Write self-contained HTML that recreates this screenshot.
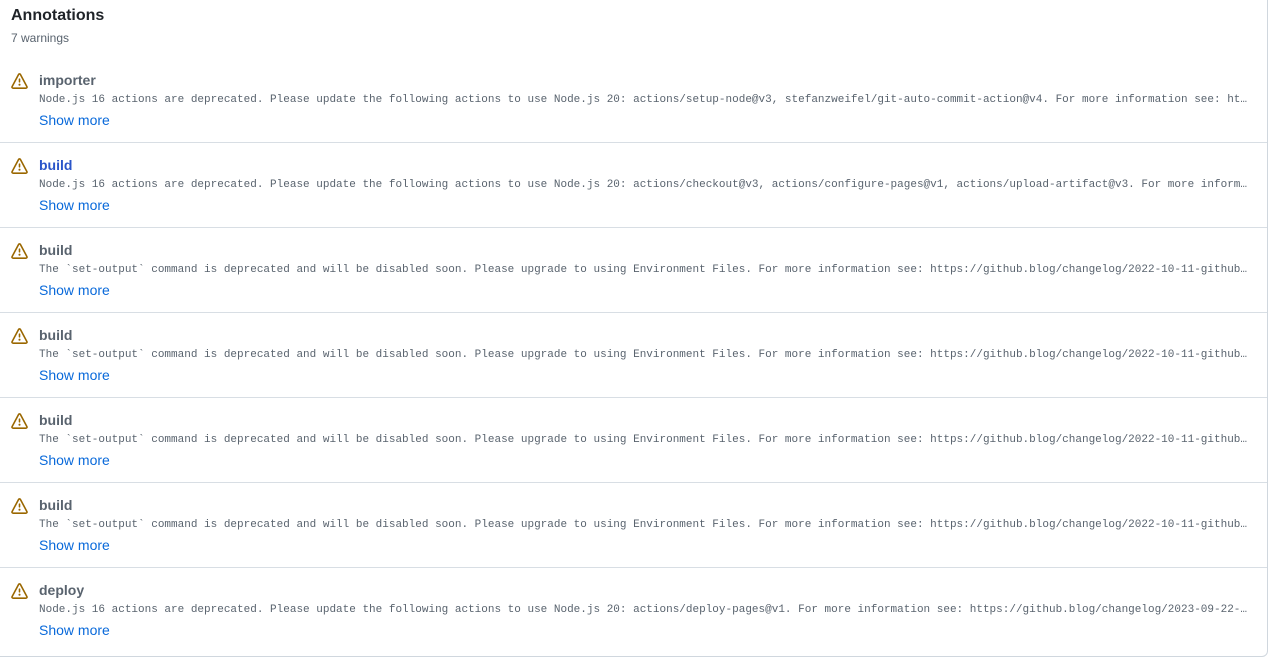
<!DOCTYPE html>
<html><head><meta charset="utf-8"><style>
html,body{margin:0;padding:0;background:#fff;width:1273px;height:664px;overflow:hidden;font-family:"Liberation Sans",sans-serif;}
.box{position:absolute;left:-10px;top:-10px;width:1278px;height:667px;border:1px solid #d0d7de;border-radius:6px;box-sizing:border-box;}
h2{position:absolute;left:11px;top:7px;margin:0;font-size:16px;font-weight:bold;color:#1f2328;}
.sub{position:absolute;left:11px;top:31px;font-size:12px;color:#59636e;}
.row{position:absolute;left:0;width:1267px;height:85px;border-bottom:1px solid #d8dee4;box-sizing:border-box;}
.row svg{position:absolute;left:11px;top:15px;}
.name{position:absolute;left:39px;top:14px;font-size:14px;font-weight:bold;color:#59636e;}
.name.b{color:#2a55c9;}
.msg{position:absolute;left:39px;top:36px;width:1209px;font-family:"Liberation Mono",monospace;font-size:11px;color:#59636e;white-space:nowrap;overflow:hidden;text-overflow:ellipsis;}
.more{position:absolute;left:39px;top:54px;font-size:14px;color:#0969da;}
</style></head><body>
<div class="box"></div>
<h2>Annotations</h2>
<div class="sub">7 warnings</div>

<div class="row" style="top:58px"><svg width="17" height="17" viewBox="0 0 16 16"><path fill="#9a6700" d="M6.457 1.047c.659-1.234 2.427-1.234 3.086 0l6.082 11.378A1.75 1.75 0 0 1 14.082 15H1.918a1.75 1.75 0 0 1-1.543-2.575Zm1.763.707a.25.25 0 0 0-.44 0L1.698 13.132a.25.25 0 0 0 .22.368h12.164a.25.25 0 0 0 .22-.368Zm.53 3.996v2.5a.75.75 0 0 1-1.5 0v-2.5a.75.75 0 0 1 1.5 0ZM9 11a1 1 0 1 1-2 0 1 1 0 0 1 2 0Z"/></svg><div class="name">importer</div><div class="msg">Node.js 16 actions are deprecated. Please update the following actions to use Node.js 20: actions/setup-node@v3, stefanzweifel/git-auto-commit-action@v4. For more information see: https://github.blog/changelog/2023-09-22-github-actions-transitioning-from-node-16-to-node-20/.</div><div class="more">Show more</div></div>

<div class="row" style="top:143px"><svg width="17" height="17" viewBox="0 0 16 16"><path fill="#9a6700" d="M6.457 1.047c.659-1.234 2.427-1.234 3.086 0l6.082 11.378A1.75 1.75 0 0 1 14.082 15H1.918a1.75 1.75 0 0 1-1.543-2.575Zm1.763.707a.25.25 0 0 0-.44 0L1.698 13.132a.25.25 0 0 0 .22.368h12.164a.25.25 0 0 0 .22-.368Zm.53 3.996v2.5a.75.75 0 0 1-1.5 0v-2.5a.75.75 0 0 1 1.5 0ZM9 11a1 1 0 1 1-2 0 1 1 0 0 1 2 0Z"/></svg><div class="name b">build</div><div class="msg">Node.js 16 actions are deprecated. Please update the following actions to use Node.js 20: actions/checkout@v3, actions/configure-pages@v1, actions/upload-artifact@v3. For more information see: https://github.blog/changelog/</div><div class="more">Show more</div></div>

<div class="row" style="top:228px"><svg width="17" height="17" viewBox="0 0 16 16"><path fill="#9a6700" d="M6.457 1.047c.659-1.234 2.427-1.234 3.086 0l6.082 11.378A1.75 1.75 0 0 1 14.082 15H1.918a1.75 1.75 0 0 1-1.543-2.575Zm1.763.707a.25.25 0 0 0-.44 0L1.698 13.132a.25.25 0 0 0 .22.368h12.164a.25.25 0 0 0 .22-.368Zm.53 3.996v2.5a.75.75 0 0 1-1.5 0v-2.5a.75.75 0 0 1 1.5 0ZM9 11a1 1 0 1 1-2 0 1 1 0 0 1 2 0Z"/></svg><div class="name">build</div><div class="msg">The `set-output` command is deprecated and will be disabled soon. Please upgrade to using Environment Files. For more information see: https://github.blog/changelog/2022-10-11-github-actions-deprecating</div><div class="more">Show more</div></div>

<div class="row" style="top:313px"><svg width="17" height="17" viewBox="0 0 16 16"><path fill="#9a6700" d="M6.457 1.047c.659-1.234 2.427-1.234 3.086 0l6.082 11.378A1.75 1.75 0 0 1 14.082 15H1.918a1.75 1.75 0 0 1-1.543-2.575Zm1.763.707a.25.25 0 0 0-.44 0L1.698 13.132a.25.25 0 0 0 .22.368h12.164a.25.25 0 0 0 .22-.368Zm.53 3.996v2.5a.75.75 0 0 1-1.5 0v-2.5a.75.75 0 0 1 1.5 0ZM9 11a1 1 0 1 1-2 0 1 1 0 0 1 2 0Z"/></svg><div class="name">build</div><div class="msg">The `set-output` command is deprecated and will be disabled soon. Please upgrade to using Environment Files. For more information see: https://github.blog/changelog/2022-10-11-github-actions-deprecating</div><div class="more">Show more</div></div>

<div class="row" style="top:398px"><svg width="17" height="17" viewBox="0 0 16 16"><path fill="#9a6700" d="M6.457 1.047c.659-1.234 2.427-1.234 3.086 0l6.082 11.378A1.75 1.75 0 0 1 14.082 15H1.918a1.75 1.75 0 0 1-1.543-2.575Zm1.763.707a.25.25 0 0 0-.44 0L1.698 13.132a.25.25 0 0 0 .22.368h12.164a.25.25 0 0 0 .22-.368Zm.53 3.996v2.5a.75.75 0 0 1-1.5 0v-2.5a.75.75 0 0 1 1.5 0ZM9 11a1 1 0 1 1-2 0 1 1 0 0 1 2 0Z"/></svg><div class="name">build</div><div class="msg">The `set-output` command is deprecated and will be disabled soon. Please upgrade to using Environment Files. For more information see: https://github.blog/changelog/2022-10-11-github-actions-deprecating</div><div class="more">Show more</div></div>

<div class="row" style="top:483px"><svg width="17" height="17" viewBox="0 0 16 16"><path fill="#9a6700" d="M6.457 1.047c.659-1.234 2.427-1.234 3.086 0l6.082 11.378A1.75 1.75 0 0 1 14.082 15H1.918a1.75 1.75 0 0 1-1.543-2.575Zm1.763.707a.25.25 0 0 0-.44 0L1.698 13.132a.25.25 0 0 0 .22.368h12.164a.25.25 0 0 0 .22-.368Zm.53 3.996v2.5a.75.75 0 0 1-1.5 0v-2.5a.75.75 0 0 1 1.5 0ZM9 11a1 1 0 1 1-2 0 1 1 0 0 1 2 0Z"/></svg><div class="name">build</div><div class="msg">The `set-output` command is deprecated and will be disabled soon. Please upgrade to using Environment Files. For more information see: https://github.blog/changelog/2022-10-11-github-actions-deprecating</div><div class="more">Show more</div></div>

<div class="row" style="top:568px;border-bottom:none"><svg width="17" height="17" viewBox="0 0 16 16"><path fill="#9a6700" d="M6.457 1.047c.659-1.234 2.427-1.234 3.086 0l6.082 11.378A1.75 1.75 0 0 1 14.082 15H1.918a1.75 1.75 0 0 1-1.543-2.575Zm1.763.707a.25.25 0 0 0-.44 0L1.698 13.132a.25.25 0 0 0 .22.368h12.164a.25.25 0 0 0 .22-.368Zm.53 3.996v2.5a.75.75 0 0 1-1.5 0v-2.5a.75.75 0 0 1 1.5 0ZM9 11a1 1 0 1 1-2 0 1 1 0 0 1 2 0Z"/></svg><div class="name">deploy</div><div class="msg">Node.js 16 actions are deprecated. Please update the following actions to use Node.js 20: actions/deploy-pages@v1. For more information see: https://github.blog/changelog/2023-09-22-github-actions-transitioning</div><div class="more">Show more</div></div>
</body></html>
